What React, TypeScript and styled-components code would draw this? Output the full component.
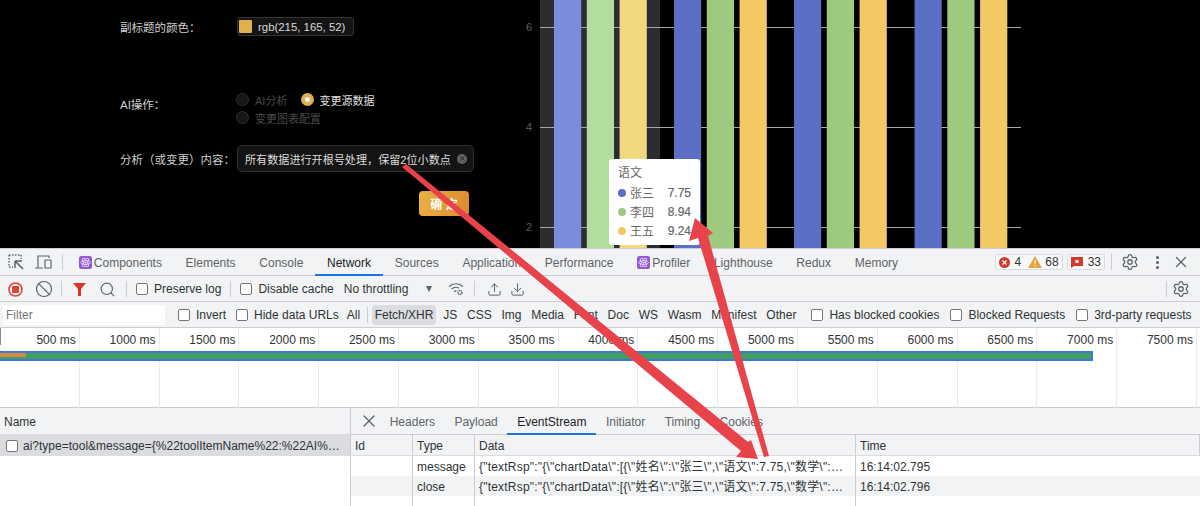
import styled, { createGlobalStyle } from "styled-components"
import { Ban, Download, Search, Settings, Upload, X } from "lucide-react"

const SANS = `"Liberation Sans", "Noto Sans CJK SC", Arial, sans-serif`

const GlobalStyle = createGlobalStyle`
    html, body {
        margin: 0;
        width: 1200px;
        height: 506px;
        overflow: hidden;
        background: #000;
    }
    * {
        box-sizing: border-box;
    }
`

const groups = [
    { x: 54, colors: ["#7a8cdb", "#b3dd9c", "#f2d97f"] },
    { x: 174, colors: ["#5a70c4", "#9dca7f", "#f3c966"] },
    { x: 294, colors: ["#5a70c4", "#9dca7f", "#f3c966"] },
    { x: 414.5, colors: ["#5a70c4", "#9dca7f", "#f3c966"] },
]

const ticks = [
    { label: "6", y: 27 },
    { label: "4", y: 127 },
    { label: "2", y: 227 },
]

const tooltipRows = [
    { name: "张三", value: "7.75", color: "#5a70c4" },
    { name: "李四", value: "8.94", color: "#9dca7f" },
    { name: "王五", value: "9.24", color: "#f3c966" },
]

const mainTabs = ["Elements", "Console", "Network", "Sources", "Application", "Performance"]
const rearTabs = ["Lighthouse", "Redux", "Memory"]
const typeFilters = ["JS", "CSS", "Img", "Media", "Font", "Doc", "WS", "Wasm", "Manifest", "Other"]
const detailTabs = ["Headers", "Payload", "EventStream", "Initiator", "Timing", "Cookies"]
const rulerMarks = [500, 1000, 1500, 2000, 2500, 3000, 3500, 4000, 4500, 5000, 5500, 6000, 6500, 7000, 7500]

const streamData = `{"textRsp":"{\\"chartData\\":[{\\"姓名\\":\\"张三\\",\\"语文\\":7.75,\\"数学\\":…`
const events = [
    { type: "message", time: "16:14:02.795" },
    { type: "close", time: "16:14:02.796" },
]

function ReactBadge() {
    return (
        <svg width="13" height="13" viewBox="0 0 13 13">
            <rect width="13" height="13" rx="2.5" fill="#9257cf" />
            <g fill="none" stroke="#eadcf8" strokeWidth="0.8">
                <ellipse cx="6.5" cy="6.5" rx="5" ry="2" />
                <ellipse cx="6.5" cy="6.5" rx="5" ry="2" transform="rotate(60 6.5 6.5)" />
                <ellipse cx="6.5" cy="6.5" rx="5" ry="2" transform="rotate(120 6.5 6.5)" />
            </g>
            <circle cx="6.5" cy="6.5" r="1" fill="#eadcf8" />
        </svg>
    )
}

function InspectIcon() {
    return (
        <svg width="16" height="16" viewBox="0 0 16 16" fill="none" stroke="#5f6368">
            <path d="M1 1h12M1 1v12M13 1v4M1 13h4" strokeDasharray="1.5 1.5" strokeWidth="1.4" />
            <path d="M7 7h7M7 7v7M7.5 7.5l7.5 7.5" strokeWidth="1.5" />
        </svg>
    )
}

function DeviceIcon() {
    return (
        <svg width="17" height="14" viewBox="0 0 17 14" fill="none" stroke="#5f6368" strokeWidth="1.2">
            <path d="M0 13h8M3 13V1h11v2" />
            <rect x="10" y="5" width="6" height="8" rx="0.6" />
        </svg>
    )
}

function RecordIcon() {
    return (
        <svg width="15" height="15" viewBox="0 0 15 15">
            <circle cx="7.5" cy="7.5" r="6.5" fill="none" stroke="#d9453b" strokeWidth="1.6" />
            <rect x="4" y="4" width="7" height="7" rx="1" fill="#d9453b" />
        </svg>
    )
}

function FunnelIcon() {
    return (
        <svg width="13" height="13" viewBox="0 0 13 13">
            <path d="M0 0h13L8 6v7H5V6z" fill="#d9362b" />
        </svg>
    )
}

function WifiGearIcon() {
    return (
        <svg width="16" height="14" viewBox="0 0 16 14" fill="none" stroke="#5f6368" strokeWidth="1.2">
            <path d="M1 4.5C5 .8 11 .8 15 4.5M3.5 7C6 5 9 5 11 6.2M6 9.5c.8-.6 1.6-.8 2.4-.7" />
            <circle cx="12" cy="10.5" r="2" strokeDasharray="1.2 .6" strokeWidth="1.5" />
        </svg>
    )
}

function ErrorIcon() {
    return (
        <svg width="11" height="11" viewBox="0 0 11 11">
            <circle cx="5.5" cy="5.5" r="5.5" fill="#d0392e" />
            <path d="M3.5 3.5l4 4M7.5 3.5l-4 4" stroke="#fff" strokeWidth="1.2" />
        </svg>
    )
}

function WarningIcon() {
    return (
        <svg width="14" height="12" viewBox="0 0 14 12">
            <path d="M7 0l7 12H0z" fill="#e8a13f" />
            <path d="M7 4v4M7 9v1.5" stroke="#fff" strokeWidth="1.1" />
        </svg>
    )
}

function IssueIcon() {
    return (
        <svg width="12" height="11" viewBox="0 0 12 11">
            <path d="M0 0h12v9H3l-3 2z" fill="#d9362b" />
            <rect x="4.5" y="3" width="3" height="3" fill="#fff" />
        </svg>
    )
}

export default function App() {
    return (
        <Page>
            <GlobalStyle />
            <AppArea>
                <FormPanel>
                    <ColorRow>
                        <FieldLabel>副标题的颜色：</FieldLabel>
                        <ColorChip>
                            <Swatch />
                            rgb(215, 165, 52)
                        </ColorChip>
                    </ColorRow>
                    <RadioRow>
                        <RadioLabel>AI操作：</RadioLabel>
                        <RadioList>
                            <RadioLine>
                                <RadioOption>
                                    <RadioDot />
                                    AI分析
                                </RadioOption>
                                <RadioOption $checked>
                                    <RadioDot $checked />
                                    变更源数据
                                </RadioOption>
                            </RadioLine>
                            <RadioLine>
                                <RadioOption>
                                    <RadioDot />
                                    变更图表配置
                                </RadioOption>
                            </RadioLine>
                        </RadioList>
                    </RadioRow>
                    <InputRow>
                        <FieldLabel>分析（或变更）内容：</FieldLabel>
                        <TextField>
                            所有数据进行开根号处理，保留2位小数点
                            <ClearDot>
                                <X size={7} strokeWidth={3} color="#141414" />
                            </ClearDot>
                        </TextField>
                    </InputRow>
                    <ActionRow>
                        <ConfirmButton>确 定</ConfirmButton>
                    </ActionRow>
                </FormPanel>
                <ChartPanel>
                    <svg width="700" height="248" viewBox="0 0 700 248">
                        <rect x="40" y="0" width="120" height="248" fill="#2b2d31" />
                        {ticks.map(tick => (
                            <g key={tick.label}>
                                <line x1="40" x2="521" y1={tick.y + 0.5} y2={tick.y + 0.5} stroke="#a8a8a8" />
                                <text x="29" y={tick.y + 4} fontSize="11" fill="#5c5c5c" fontFamily={SANS} textAnchor="middle">
                                    {tick.label}
                                </text>
                            </g>
                        ))}
                        {groups.map(group =>
                            group.colors.map((color, i) => (
                                <rect key={i} x={group.x + i * 32.8} y="0" width="27.2" height="248" fill={color} />
                            ))
                        )}
                    </svg>
                    <Tooltip>
                        <TooltipTitle>语文</TooltipTitle>
                        {tooltipRows.map(row => (
                            <TooltipRow key={row.name}>
                                <TooltipDot $color={row.color} />
                                {row.name}
                                <TooltipValue>{row.value}</TooltipValue>
                            </TooltipRow>
                        ))}
                    </Tooltip>
                </ChartPanel>
            </AppArea>

            <DevTools>
                <TabBar>
                    <IconSlot $left={8} $width={16}><InspectIcon /></IconSlot>
                    <IconSlot $left={11} $width={17}><DeviceIcon /></IconSlot>
                    <Divider $left={10} $right={4} />
                    <Tab>
                        <ReactBadge />
                        Components
                    </Tab>
                    {mainTabs.map(tab => (
                        <Tab key={tab} $active={tab === "Network"}>{tab}</Tab>
                    ))}
                    <Tab>
                        <ReactBadge />
                        Profiler
                    </Tab>
                    {rearTabs.map(tab => (
                        <Tab key={tab}>{tab}</Tab>
                    ))}
                    <TabBarRight>
                        <CountBadge>
                            <ErrorIcon />
                            <CountText $after={2}>4</CountText>
                            <WarningIcon />
                            <CountText $before={-2}>68</CountText>
                        </CountBadge>
                        <CountBadge>
                            <IssueIcon />
                            <CountText>33</CountText>
                        </CountBadge>
                        <Divider $left={2} $right={10} />
                        <IconSlot $left={0} $width={15}><Settings size={18} color="#5f6368" strokeWidth={1.7} /></IconSlot>
                        <MoreDots />
                        <IconSlot $left={0} $width={14}><X size={18} color="#5f6368" strokeWidth={1.7} /></IconSlot>
                    </TabBarRight>
                </TabBar>

                <Toolbar>
                    <IconSlot $left={8} $width={15}><RecordIcon /></IconSlot>
                    <IconSlot $left={13} $width={15}><Ban size={18} color="#5f6368" strokeWidth={1.6} /></IconSlot>
                    <Divider $left={10} $right={11} />
                    <IconSlot $left={0} $width={13}><FunnelIcon /></IconSlot>
                    <IconSlot $left={15} $width={13}><Search size={17} color="#5f6368" strokeWidth={1.6} /></IconSlot>
                    <Divider $left={12} $right={9} />
                    <CheckLabel>
                        <CheckBox />
                        Preserve log
                    </CheckLabel>
                    <Divider $left={9} $right={9} />
                    <CheckLabel>
                        <CheckBox />
                        Disable cache
                    </CheckLabel>
                    <ThrottleSelect>
                        No throttling
                        <Caret />
                    </ThrottleSelect>
                    <IconSlot $left={16} $width={16}><WifiGearIcon /></IconSlot>
                    <Divider $left={10} $right={12} />
                    <IconSlot $left={1} $width={12}><Upload size={15} color="#5f6368" strokeWidth={1.6} /></IconSlot>
                    <IconSlot $left={11} $width={12}><Download size={15} color="#5f6368" strokeWidth={1.6} /></IconSlot>
                    <ToolbarEnd>
                        <Divider $left={0} $right={6} />
                        <IconSlot $left={0} $width={15}><Settings size={18} color="#5f6368" strokeWidth={1.7} /></IconSlot>
                    </ToolbarEnd>
                </Toolbar>

                <FilterBar>
                    <FilterInput>Filter</FilterInput>
                    <FilterCheck $left={13}>
                        <CheckBox />
                        Invert
                    </FilterCheck>
                    <FilterCheck $left={10}>
                        <CheckBox />
                        Hide data URLs
                    </FilterCheck>
                    <TypeFilters>
                        <TypeChip>All</TypeChip>
                        <Divider $left={0} $right={0} />
                        <TypeChip $active>Fetch/XHR</TypeChip>
                        {typeFilters.map(name => (
                            <TypeChip key={name}>{name}</TypeChip>
                        ))}
                    </TypeFilters>
                    <FilterCheck $left={12}>
                        <CheckBox />
                        Has blocked cookies
                    </FilterCheck>
                    <FilterCheck $left={11}>
                        <CheckBox />
                        Blocked Requests
                    </FilterCheck>
                    <FilterCheck $left={11}>
                        <CheckBox />
                        3rd-party requests
                    </FilterCheck>
                </FilterBar>

                <Overview>
                    {rulerMarks.map(mark => (
                        <RulerCell key={mark}>{mark} ms</RulerCell>
                    ))}
                    <RangeHandle />
                    <RequestBar>
                        <RequestBarFill>
                            <RequestBarWait />
                        </RequestBarFill>
                    </RequestBar>
                </Overview>

                <BottomSplit>
                    <RequestPane>
                        <NameHeader>Name</NameHeader>
                        <RequestRow>
                            <CheckBox />
                            <RequestName>ai?type=tool&amp;message={"{"}%22toolItemName%22:%22AI%…</RequestName>
                        </RequestRow>
                    </RequestPane>
                    <DetailPane>
                        <DetailTabs>
                            <IconSlot $left={0} $width={14}><X size={20} color="#5f6368" strokeWidth={1.5} /></IconSlot>
                            <DetailTabList>
                                {detailTabs.map(tab => (
                                    <DetailTab key={tab} $active={tab === "EventStream"}>{tab}</DetailTab>
                                ))}
                            </DetailTabList>
                        </DetailTabs>
                        <EventTable>
                            <HeadCell>Id</HeadCell>
                            <HeadCell>Type</HeadCell>
                            <HeadCell>Data</HeadCell>
                            <HeadCell>Time</HeadCell>
                            {events.map((event, i) => (
                                <EventRow key={event.type} $alt={i % 2 === 1}>
                                    <EventCell />
                                    <EventCell>{event.type}</EventCell>
                                    <DataCell>{streamData}</DataCell>
                                    <EventCell>{event.time}</EventCell>
                                </EventRow>
                            ))}
                            <EventRow>
                                <EventFill />
                                <EventFill />
                                <EventFill />
                                <EventFill />
                            </EventRow>
                        </EventTable>
                    </DetailPane>
                </BottomSplit>
            </DevTools>

            <ArrowLayer width="1200" height="506" viewBox="0 0 1200 506">
                <polygon points="402,167 406,164 748,442 751,440 758,459 736,457 741,451" fill="#e8434b" />
                <polygon points="695,218 713,233 708,236 769,456 764,457 698,238 689,241" fill="#e8434b" />
            </ArrowLayer>
        </Page>
    )
}

const Page = styled.div`
    position: relative;
    width: 1200px;
    height: 506px;
    overflow: hidden;
    font-family: ${SANS};
`

const AppArea = styled.div`
    display: flex;
    height: 248px;
    background: #000;
    overflow: hidden;
`

const FormPanel = styled.div`
    width: 500px;
    padding: 17px 31px 0 120px;
    display: flex;
    flex-direction: column;
    color: #d8d8d8;
`

const FieldLabel = styled.div`
    width: 117px;
    flex-shrink: 0;
    white-space: nowrap;
    font-size: 11.5px;
    color: #cfcfcf;
`

const ColorRow = styled.div`
    display: flex;
    align-items: center;
    height: 19px;
`

const ColorChip = styled.div`
    width: 117px;
    height: 19px;
    flex-shrink: 0;
    display: flex;
    align-items: center;
    gap: 6px;
    padding-left: 1px;
    border: 1px solid #333;
    border-radius: 3px;
    background: #141414;
    font-size: 11.4px;
    color: #d8d8d8;
    white-space: nowrap;
`

const Swatch = styled.span`
    width: 13px;
    height: 13px;
    border-radius: 1px;
    background: #dfb04c;
`

const RadioRow = styled.div`
    display: flex;
    align-items: flex-start;
    margin-top: 55px;
    height: 36px;
`

const RadioLabel = styled(FieldLabel)`
    margin-top: 5px;
`

const RadioList = styled.div`
    display: flex;
    flex-direction: column;
    gap: 1px;
    margin-left: -1px;
`

const RadioLine = styled.div`
    display: flex;
    height: 17px;
    gap: 14px;
    align-items: center;
`

const RadioOption = styled.div<{ $checked?: boolean }>`
    display: flex;
    align-items: center;
    gap: ${props => props.$checked ? "5px" : "6px"};
    white-space: nowrap;
    font-size: 11px;
    color: ${props => props.$checked ? "#e0e0e0" : "#4a4a4a"};
`

const RadioDot = styled.span<{ $checked?: boolean }>`
    width: 13px;
    height: 13px;
    border-radius: 50%;
    background: ${props => props.$checked ? "#dfb04c" : "#161616"};
    border: ${props => props.$checked ? "4px solid #dfb04c" : "1px solid #303030"};
    box-shadow: ${props => props.$checked ? "inset 0 0 0 3px #fff" : "none"};
`

const InputRow = styled.div`
    display: flex;
    align-items: center;
    margin-top: 18px;
    height: 27px;
`

const TextField = styled.div`
    width: 237px;
    height: 27px;
    flex-shrink: 0;
    display: flex;
    align-items: center;
    justify-content: space-between;
    padding: 0 6px 0 7px;
    background: #141414;
    border: 1px solid #303030;
    border-radius: 5px;
    font-size: 11.1px;
    color: #dedede;
    white-space: nowrap;
`

const ClearDot = styled.span`
    width: 10px;
    height: 10px;
    border-radius: 50%;
    background: #626262;
    display: flex;
    align-items: center;
    justify-content: center;
`

const ActionRow = styled.div`
    display: flex;
    justify-content: flex-end;
    margin-top: 19px;
`

const ConfirmButton = styled.div`
    width: 50px;
    height: 25px;
    display: flex;
    align-items: center;
    justify-content: center;
    border-radius: 4px;
    background: linear-gradient(100deg, #eab143, #dc8a2e);
    color: #fff;
    font-size: 12px;
    font-weight: bold;
`

const ChartPanel = styled.div`
    position: relative;
    width: 700px;
    height: 248px;
    svg {
        display: block;
    }
`

const Tooltip = styled.div`
    position: absolute;
    left: 109px;
    top: 159px;
    width: 91px;
    height: 86px;
    padding: 5px 9px;
    background: #fff;
    border-radius: 3px;
    color: #666;
    font-size: 12px;
`

const TooltipTitle = styled.div`
    height: 19px;
    line-height: 19px;
`

const TooltipRow = styled.div`
    display: flex;
    align-items: center;
    height: 19px;
`

const TooltipDot = styled.span<{ $color: string }>`
    width: 8px;
    height: 8px;
    margin-right: 4px;
    border-radius: 50%;
    background: ${props => props.$color};
`

const TooltipValue = styled.span`
    margin-left: auto;
    font-weight: 500;
    font-size: 12px;
    -webkit-text-stroke: 0.2px #666;
`

const DevTools = styled.div`
    height: 258px;
    display: flex;
    flex-direction: column;
    background: #f1f3f4;
    border-top: 1px solid #cbcdd1;
    font-size: 12px;
    color: #303336;
`

const TabBar = styled.div`
    height: 27px;
    flex-shrink: 0;
    display: flex;
    align-items: stretch;
    border-bottom: 1px solid #cbcdd1;
`

const IconSlot = styled.div<{ $left: number, $width: number }>`
    width: ${props => props.$width}px;
    margin-left: ${props => props.$left}px;
    flex-shrink: 0;
    display: flex;
    align-items: center;
    justify-content: center;
    svg {
        flex-shrink: 0;
    }
`

const Divider = styled.span<{ $left: number, $right: number }>`
    align-self: center;
    width: 1px;
    height: 16px;
    flex-shrink: 0;
    margin: 0 ${props => props.$right}px 0 ${props => props.$left}px;
    background: #cbcdd1;
`

const Tab = styled.div<{ $active?: boolean }>`
    display: flex;
    align-items: center;
    gap: 2px;
    padding: 0 11.85px;
    margin-bottom: -1px;
    white-space: nowrap;
    color: ${props => props.$active ? "#202124" : "#5f6368"};
    border-bottom: 2px solid ${props => props.$active ? "#1a73e8" : "transparent"};
    border-top: 2px solid transparent;
`

const TabBarRight = styled.div`
    margin-left: auto;
    padding-right: 12px;
    display: flex;
    align-items: center;
`

const CountBadge = styled.div`
    height: 16px;
    display: flex;
    align-items: center;
    gap: 5px;
    margin-right: 4px;
    padding: 0 3px;
    background: #f8f9fa;
    border: 1px solid #dadce0;
    border-radius: 2px;
`

const CountText = styled.span<{ $before?: number, $after?: number }>`
    margin-left: ${props => props.$before || 0}px;
    margin-right: ${props => props.$after || 0}px;
    color: #333;
`

const MoreDots = styled.span`
    width: 3px;
    height: 3px;
    margin: 0 15.5px 0 18.5px;
    border-radius: 50%;
    background: #5f6368;
    box-shadow: 0 -5px 0 #5f6368, 0 5px 0 #5f6368;
`

const Toolbar = styled.div`
    height: 26px;
    flex-shrink: 0;
    display: flex;
    align-items: center;
    padding-top: 1px;
    border-bottom: 1px solid #cbcdd1;
`

const ToolbarEnd = styled.div`
    margin-left: auto;
    padding-right: 12px;
    display: flex;
    align-items: center;
`

const CheckBox = styled.span`
    width: 12px;
    height: 12px;
    flex-shrink: 0;
    background: #fff;
    border: 1px solid #767676;
    border-radius: 2px;
`

const CheckLabel = styled.div`
    display: flex;
    align-items: center;
    gap: 6px;
    white-space: nowrap;
`

const ThrottleSelect = styled.div`
    display: flex;
    align-items: center;
    margin-left: 10px;
    white-space: nowrap;
`

const Caret = styled.span`
    width: 0;
    height: 0;
    margin-left: 18px;
    border-left: 3.5px solid transparent;
    border-right: 3.5px solid transparent;
    border-top: 6px solid #5f6368;
`

const FilterBar = styled.div`
    height: 26px;
    flex-shrink: 0;
    display: flex;
    align-items: center;
    padding: 1px 0 0 3px;
    border-bottom: 1px solid #cbcdd1;
    white-space: nowrap;
`

const FilterInput = styled.div`
    width: 162px;
    height: 20px;
    line-height: 20px;
    padding-left: 3px;
    background: #fff;
    color: #757575;
`

const FilterCheck = styled(CheckLabel)<{ $left: number }>`
    margin-left: ${props => props.$left}px;
`

const TypeFilters = styled.div`
    display: flex;
    align-items: center;
    gap: 3.8px;
    margin-left: 5px;
`

const TypeChip = styled.div<{ $active?: boolean }>`
    height: 20px;
    line-height: 20px;
    padding: 0 3px;
    border-radius: 4px;
    background: ${props => props.$active ? "#dadce0" : "transparent"};
`

const Overview = styled.div`
    position: relative;
    height: 80px;
    flex-shrink: 0;
    display: grid;
    grid-template-columns: repeat(15, 79.8px);
    background: #fff;
    border-bottom: 1px solid #cbcdd1;
`

const RulerCell = styled.div`
    height: 80px;
    padding: 5px 3px 0 0;
    line-height: 14px;
    text-align: right;
    border-right: 1px solid #e8eaed;
`

const RangeHandle = styled.div`
    position: absolute;
    left: 0;
    top: 0;
    width: 1px;
    height: 17px;
    background: #8a8a8a;
`

const RequestBar = styled.div`
    position: absolute;
    left: 0;
    top: 23px;
    width: 1093px;
    height: 10px;
    padding: 2px 2px 2px 0;
    background: #3b78dc;
`

const RequestBarFill = styled.div`
    height: 6px;
    background: #43a05c;
`

const RequestBarWait = styled.div`
    width: 26px;
    height: 4px;
    background: #d88a3c;
`

const BottomSplit = styled.div`
    flex: 1;
    min-height: 0;
    display: flex;
    background: #fff;
`

const RequestPane = styled.div`
    width: 351px;
    flex-shrink: 0;
    border-right: 1px solid #cbcdd1;
`

const NameHeader = styled.div`
    height: 27px;
    line-height: 29px;
    padding-left: 4px;
    background: #f1f3f4;
    border-bottom: 1px solid #dadce0;
`

const RequestRow = styled.div`
    height: 21px;
    display: flex;
    align-items: center;
    gap: 5px;
    padding: 1px 5px 0 6px;
    background: #dadce0;
`

const RequestName = styled.span`
    white-space: nowrap;
`

const DetailPane = styled.div`
    flex: 1;
    min-width: 0;
`

const DetailTabs = styled.div`
    height: 27px;
    display: flex;
    align-items: stretch;
    padding-left: 11px;
    background: #f1f3f4;
    border-bottom: 1px solid #cbcdd1;
`

const DetailTabList = styled.div`
    display: flex;
    margin-left: 4px;
`

const DetailTab = styled.div<{ $active?: boolean }>`
    display: flex;
    align-items: center;
    padding: 0 9.7px;
    margin-bottom: -1px;
    color: ${props => props.$active ? "#202124" : "#5f6368"};
    border-bottom: 2px solid ${props => props.$active ? "#1a73e8" : "transparent"};
    border-top: 2px solid transparent;
`

const EventTable = styled.div`
    display: grid;
    grid-template-columns: 62px 62px 381px 1fr;
    grid-template-rows: 21px 20px 20px 10px;
`

const HeadCell = styled.div`
    padding: 2px 0 0 4px;
    line-height: 18px;
    background: #f1f3f4;
    border-right: 1px solid #cbcdd1;
    border-bottom: 1px solid #dadce0;
    &:last-of-type {
        border-right: none;
    }
`

const EventRow = styled.div<{ $alt?: boolean }>`
    display: contents;
    & > div {
        background: ${props => props.$alt ? "#f1f3f4" : "#fff"};
    }
`

const EventCell = styled.div`
    line-height: 18px;
    padding: 2px 4px 0;
    overflow: hidden;
    white-space: nowrap;
    border-right: 1px solid #cbcdd1;
    &:last-child {
        border-right: none;
    }
`

const DataCell = styled(EventCell)`
    letter-spacing: 0.2px;
`

const EventFill = styled.div`
    border-right: 1px solid #cbcdd1;
    &:last-child {
        border-right: none;
    }
`

const ArrowLayer = styled.svg`
    position: absolute;
    left: 0;
    top: 0;
    pointer-events: none;
`
